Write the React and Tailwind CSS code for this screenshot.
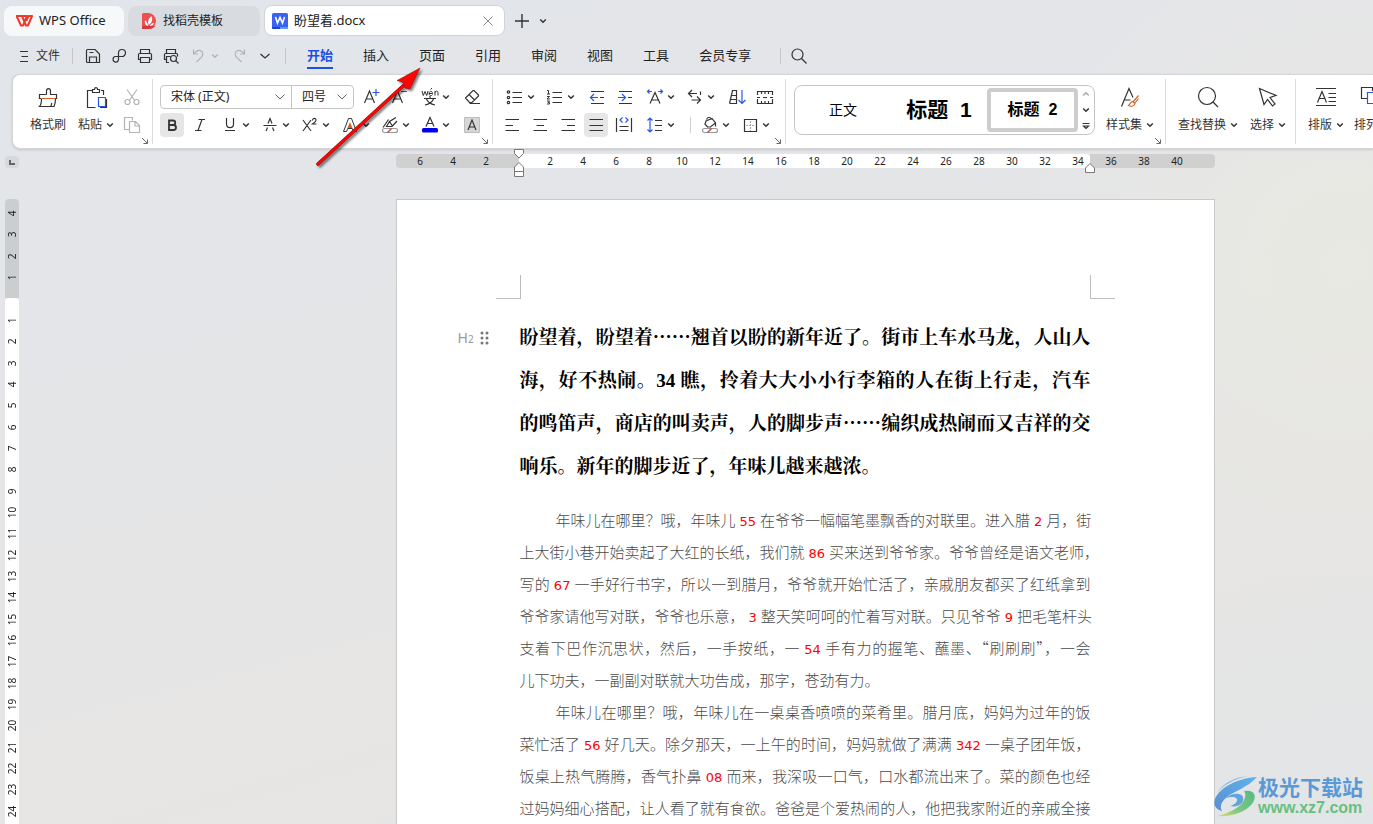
import { Fragment } from "react";

const menus = ["开始", "插入", "页面", "引用", "审阅", "视图", "工具", "会员专享"];

const rulerMid = [2, 4, 6, 8, 10, 12, 14, 16, 18, 20, 22, 24, 26, 28, 30, 32, 34];
const rulerSide = Array.from({ length: 24 }, (_, i) => i + 1);

const headingLines = [
  "盼望着，盼望着……翘首以盼的新年近了。街市上车水马龙，人山人",
  "海，好不热闹。34 瞧，拎着大大小小行李箱的人在街上行走，汽车",
  "的鸣笛声，商店的叫卖声，人的脚步声……编织成热闹而又吉祥的交",
  "响乐。新年的脚步近了，年味儿越来越浓。",
];

const paragraphs = [
  [
    "年味儿在哪里？哦，年味儿55在爷爷一幅幅笔墨飘香的对联里。进入腊2月，街",
    "上大街小巷开始卖起了大红的长纸，我们就86买来送到爷爷家。爷爷曾经是语文老师，",
    "写的67一手好行书字，所以一到腊月，爷爷就开始忙活了，亲戚朋友都买了红纸拿到",
    "爷爷家请他写对联，爷爷也乐意，3整天笑呵呵的忙着写对联。只见爷爷9把毛笔杆头",
    "支着下巴作沉思状，然后，一手按纸，一54手有力的握笔、蘸墨、“刷刷刷”，一会",
    "儿下功夫，一副副对联就大功告成，那字，苍劲有力。",
  ],
  [
    "年味儿在哪里？哦，年味儿在一桌桌香喷喷的菜肴里。腊月底，妈妈为过年的饭",
    "菜忙活了56好几天。除夕那天，一上午的时间，妈妈就做了满满342一桌子团年饭，",
    "饭桌上热气腾腾，香气扑鼻08而来，我深吸一口气，口水都流出来了。菜的颜色也经",
    "过妈妈细心搭配，让人看了就有食欲。爸爸是个爱热闹的人，他把我家附近的亲戚全接",
  ],
];

function Icon({ children, className = "" }) {
  return (
    <svg
      width="24"
      height="24"
      viewBox="0 0 24 24"
      fill="none"
      stroke="currentColor"
      strokeWidth="1.2"
      className={`shrink-0 ${className}`}
      aria-hidden="true"
    >
      {children}
    </svg>
  );
}

function Chevron({ className = "" }) {
  return (
    <svg width="8" height="8" viewBox="0 0 8 8" fill="none" stroke="currentColor" strokeWidth="1.5" className={`shrink-0 ${className}`} aria-hidden="true">
      <path d="M1.2 2.5 4 5.2 6.8 2.5" />
    </svg>
  );
}

const BLUE = "#2458e6";
const ORANGE = "#d4622a";

const icons = {
  menu: <path d="M8 7.5h8M9.5 12.5H16M8 17.5h8" />,
  save: <path d="M5.5 17.5v-11a1 1 0 0 1 1-1h7.5l4.5 4.5v8.5h-12a1 1 0 0 1-1-1zM8.5 18.5V13h7v5.500M8.5 8.5h4" />,
  pdf: <path d="M11.5 16V9a3.500 3.500 0 1 1 3.500 3.500H8.500a2.800 2.800 0 1 0 3 3.500" />,
  print: <path d="M7.5 9.5v-4h9v4M7.5 15.5h-2v-5a1 1 0 0 1 1-1h11a1 1 0 0 1 1 1v5h-2M7.5 13.5h9v5h-9z" />,
  preview: (
    <>
      <path d="M7.5 9.5v-4h9v4M7.5 15.5h-2v-5a1 1 0 0 1 1-1h11a1 1 0 0 1 1 1v2M10 18.5H7.5v-6h4" />
      <circle cx="14.5" cy="14.5" r="3" />
      <path d="m16.7 16.7 2.8 2.8" />
    </>
  ),
  undo: <path d="M6.5 5.5V10H11M6.700 9.800C9 6.700 11.300 5.700 13.500 6.600c3 1.300 2.800 4.700.8 6.700L9.500 18" />,
  redo: <path d="M17.5 5.5V10H13M17.300 9.800C15 6.700 12.700 5.700 10.500 6.600c-3 1.300-2.800 4.700-.8 6.700L14.500 18" />,
  search: (
    <>
      <circle cx="10.5" cy="10.5" r="5.5" />
      <path d="m14.5 14.5 5 5" />
    </>
  ),
  brush: (
    <>
      <path d="M10.5 9.5V6c0-3.300 4-3.300 4 0v3.500h6v4h-17v-4h7M5.500 13.500c0 4-.5 6.500-2 8H18c1-2 1.500-5 1.500-8M14.500 21.500c.8-1 1.200-2.500 1.200-3.500" />
      <path d="M5 13.5h14.5" stroke={ORANGE} />
    </>
  ),
  paste: (
    <>
      <path d="M8 5.5H3.5v17h8M17 5.5h2.5V10M8.5 7.5h7v-3h-2c0-2.500-3-2.500-3 0h-2z" />
      <path d="M14.5 12.5h7v9h-7z" stroke={BLUE} />
      <path d="M22.5 14v8.500H16" />
    </>
  ),
  cut: (
    <>
      <path d="m7 4.500 8 11.500M17 4.500 9 16" />
      <circle cx="7.5" cy="17" r="2.5" />
      <circle cx="16.5" cy="17" r="2.5" />
    </>
  ),
  copy: <path d="M9 16.5H4.500v-12h8v3M9.500 8.500h6l4 4v7h-10zM15 9v4h4" />,
  grow: (
    <>
      <path d="M4.5 18 9.500 6l5 12M6.200 14h6.600" />
      <path d="M16 4v7M12.500 7.500h7" stroke={BLUE} />
    </>
  ),
  shrink: (
    <>
      <path d="M4.5 18 9.500 6l5 12M6.200 14h6.600" />
      <path d="M13 6.500h6" stroke={BLUE} />
    </>
  ),
  pinyin: (
    <>
      <path d="m4 6 1.300 4.500L7 6.500l1.700 4L10 6M11 8.500h3.500c0-2.800-3.500-2.800-3.500 0 0 2.600 3 2.500 3.500 1M12.500 4.500 14 3M17 10.500V6M17 7.500c.8-2 3-1.500 3 0v3" strokeWidth="1" />
      <path d="M12 11v2M6 13.500h12M8.500 14c1 2.500 4 5 8.500 6M15.500 14c-1 2.500-4 5-8.500 6" />
    </>
  ),
  eraser: <path d="m5.500 13 7.500-7.500h1l4.500 4.500v1L12 17.500H9.500zM9 9.500l5.500 5.500M9.500 18.500H20" />,
  bold: <path d="M9 7.500h4a2.200 2.200 0 0 1 0 4.500H9zM9 12h4.500a2.400 2.400 0 0 1 0 5H9z" strokeWidth="1.800" />,
  italic: <path d="M10.500 6.500H17M7 17.500h6.500M14 6.500l-4 11" />,
  underline: <path d="M8.500 5v6c0 4.800 7 4.800 7 0V5M7 17.500h10" />,
  strike: <path d="M5.500 12.500h13M8 18l1.500-3.500M16 18l-1.500-3.500M10 10.500l2-5 2 5" />,
  sup: <path d="m5 7 8 11M13 7 5 18M14.500 7.500c0-3 4-2.500 3.500 0-.2 1-2 2.300-3.500 3.500h4" />,
  outlineA: (
    <>
      <path d="M10.500 5.500h3l5 13h-3l-1.200-3H9.700l-1.200 3h-3z" strokeWidth="1" />
      <path d="m12 9-2.500 6h5z" fill={ORANGE} stroke="none" />
    </>
  ),
  highlight: (
    <>
      <path d="M18 4.500 11.500 8.500l3 4.500 4.500-5M11.500 8.500 8.500 13.500h5l1-.500M5 14.500l5.500-8" />
      <rect x="4.5" y="15.5" width="15" height="4" rx="2" stroke="#999" />
      <path d="m9.500 19.500 4-4" stroke="#e33" />
    </>
  ),
  fontColor: (
    <>
      <path d="M8 13.500 12 4.500l4 9M9.500 10.500h5" />
      <rect x="4" y="15" width="16" height="4.500" rx="1.500" fill="#0000f0" stroke="none" />
    </>
  ),
  shade: (
    <>
      <path d="M4.500 4.500h15v15h-15z" fill="#d6d6d6" stroke="#bdbdbd" strokeWidth="1" />
      <path d="m8 17 4-10 4 10M9.500 14h5" />
    </>
  ),
  bullets: (
    <>
      <circle cx="5.5" cy="7" r="1.2" />
      <circle cx="5.5" cy="12.5" r="1.2" />
      <circle cx="5.5" cy="17.5" r="1.2" />
      <path d="M9.500 7.500H19M9.500 12.500H19M9.500 17.500H19" />
    </>
  ),
  numbers: (
    <>
      <path d="M4 5.500h1.500V9M4 9h3M4 11.500h2.500l-2.500 2.500h3M4 16h2.500L5 17.500h1.500v1.500H4" strokeWidth="1" />
      <path d="M9.500 7.500H19M9.500 12.500H19M9.500 17.500H19" />
    </>
  ),
  outdent: (
    <>
      <path d="M6 6.500h13M15 12.500h4M6 18.500h13" />
      <path d="M13 12.500H5.500M9 9l-3.500 3.500L9 16" stroke={BLUE} />
    </>
  ),
  indent: (
    <>
      <path d="M6 6.500h13M15 12.500h4M6 18.500h13" />
      <path d="M5 12.500h7.500M9 9l3.500 3.500L9 16" stroke={BLUE} />
    </>
  ),
  spacingA: (
    <>
      <path d="m7 18.500 5-11 5 11M9 15h6" />
      <path d="M4.500 6.500H9M6.500 4.500l-2 2 2 2M15 6.500h4.500M17.500 4.500l2 2-2 2" stroke={BLUE} />
    </>
  ),
  wrap: <path d="M9 5 5.500 8.500 9 12M5.500 8.500H14M14 11.500l3.500 3.500-3.500 3.500M17.500 15H8.500M17.500 6.500V10" />,
  sort: (
    <>
      <path d="m4.500 18.500 3-13h4v13h-7M6.500 10.500h5M5.500 14.500h6" />
      <path d="M17 5v13.500M13.500 15l3.500 3.500 3.500-3.500" stroke={BLUE} />
    </>
  ),
  tabstop: <path d="M4.500 10V6.500h15V10M4.500 14v4.500h15V14M4 12.500h3M10 12.500h4M17 12.500h3M8.500 6.500V9M12 6.500V9M15.500 6.500V9M8.500 18.500V16M12 18.500V16M15.500 18.500V16" />,
  left: <path d="M5.500 6.500H19M5.500 12.500H13M5.500 17.500H19" />,
  center: <path d="M5.500 6.500H19M8.500 12.500H16M5.500 17.500H19" />,
  right: <path d="M5.500 6.500H19M11 12.500H19M5.500 17.500H19" />,
  justify: <path d="M5.500 6.500H19M5.500 12.500H19M5.500 17.500H19" />,
  distribute: (
    <>
      <path d="M4.500 5v14M19.500 5v14M7.500 13.500h9M7.500 17.500h9" />
      <path d="M10.500 4.500 8 7l2.500 2.500M13.500 4.500 16 7l-2.500 2.500" stroke={BLUE} />
    </>
  ),
  lineSpace: (
    <>
      <path d="M12 7.500h7M12 12.500h7M12 17.500h7" />
      <path d="M7 5v14M4.500 7.500 7 5l2.500 2.500M4.500 16.500 7 19l2.500-2.500" stroke={BLUE} />
    </>
  ),
  bucket: (
    <>
      <path d="M8.500 6.500c1-3 4-3 5 0M8 8l6-2.500 3.500 4.500-5 4H9.500L7 11zM17.500 9.500v4" />
      <rect x="4.5" y="15.5" width="15" height="4" rx="2" stroke="#999" />
      <path d="m9.500 19.500 4-4" stroke="#e33" />
    </>
  ),
  border: (
    <>
      <path d="M6.500 6.500h12v12h-12z" />
      <path d="M12.500 8v10M8 12.500h9" stroke="#aaa" strokeDasharray="2 1" />
    </>
  ),
  styleSet: (
    <>
      <path d="M3.500 21.500 11 3.500l4 9M6.500 15h6" />
      <path d="M20.500 10.500 15 17M20.500 13.500 17 18M14.500 16.500c-2 0-2 2.500-4 4 2.500 1.500 6 .5 6.500-2z" stroke={ORANGE} />
    </>
  ),
  find: (
    <>
      <circle cx="11" cy="11" r="8.5" />
      <path d="m17 17 5 5" />
    </>
  ),
  select: <path d="M3.500 3.500 8 19.500l3.500-5 5 6.500 2.500-2-5-6.500 6-2z" />,
  typeset: <path d="M2 3.500h20M2 20.500h20M3.500 17.500l4.500-11 4.500 11M5 13.500h6M14.500 8.500H22M14.500 12.500H22M14.500 16.500H22" />,
  arrange: (
    <>
      <path d="M7 13.500H1.500v-11h11V6" />
      <path d="M7.500 7.500h11v11h-11z" stroke={BLUE} />
    </>
  ),
};

// icon-only button; `drop` adds the small arrow, `on` the pressed look
function Tool({ icon, label, drop, on, dim, width = "w-7" }) {
  return (
    <button
      type="button"
      aria-label={label}
      className={`flex h-6 shrink-0 items-center rounded ${drop ? "w-10" : `${width} justify-center`} ${dim ? "text-[#b4b4b4]" : "text-[#333]"}`}
    >
      <span className={`flex h-6 w-6 items-center justify-center rounded ${on ? "bg-[#e6e6e6]" : ""}`}>
        <Icon>{icons[icon]}</Icon>
      </span>
      {drop && <Chevron />}
    </button>
  );
}

function BigTool({ icon, label, drop, className = "" }) {
  return (
    <button type="button" className={`flex shrink-0 flex-col items-center gap-1 text-[#333] ${className}`}>
      <Icon>{icons[icon]}</Icon>
      <span className="flex h-6 items-center gap-1 text-xs whitespace-nowrap">
        {label}
        {drop && <Chevron />}
      </span>
    </button>
  );
}

function Group({ children, launcher, className = "" }) {
  return (
    <section className={`relative flex shrink-0 pt-2.5 ${className}`}>
      {children}
      {launcher && (
        <button type="button" aria-label="更多设置" className="absolute right-1 bottom-1 text-[#666]">
          <svg width="6" height="6" viewBox="0 0 6 6" fill="none" stroke="currentColor" aria-hidden="true">
            <path d="m0 0 5 5M5.500 1.500v4h-4" />
          </svg>
        </button>
      )}
    </section>
  );
}

function Divider() {
  return <div className="my-1 w-px shrink-0 bg-[#dcdcdc]" />;
}

function TabBar() {
  return (
    <header className="flex h-9 items-end gap-1 px-1 text-xs text-[#222]">
      <button type="button" className="flex h-[30px] w-[120px] items-center gap-1.5 rounded-lg bg-[#f7f8fa] pl-3 text-[13px]">
        <svg width="17" height="12" viewBox="0 0 17 12" fill="none" stroke="#f0392b" strokeWidth="2" strokeLinejoin="round" aria-hidden="true">
          <path d="M.5 1H11L7 10.500H5zM6 1l4 9.500h2L16 1h-3.500l-2.300 5" />
        </svg>
        WPS Office
      </button>
      <button type="button" className="flex h-[30px] w-[132px] items-center gap-[7px] rounded-lg bg-[#d8dbe0] pl-3.5">
        <svg width="14" height="16" viewBox="0 0 14 16" aria-hidden="true">
          <path d="M0 1.500A1.500 1.500 0 0 1 1.500 0H6a8 8 0 0 1 0 16H0z" fill="#ee5050" />
          <path d="M0 13h13.500l-2 1.500C10 15.600 8 16 6 16H0z" fill="#d93a40" />
          <path d="M6 13C3 12 2.500 9.500 3 7.500 4.500 8 5.500 9.500 6 13zM6.500 12C5.500 8 6.500 5 9.500 3c1.500 3.500.5 7-3 9zM8 13c.5-2 2-3 4-3-.5 2-2 3-4 3z" fill="#fff" />
        </svg>
        找稻壳模板
      </button>
      <div className="flex h-[31px] w-[241px] items-center rounded-lg border border-[#d0d3d8] bg-white px-[7px]">
        <svg width="16" height="16" viewBox="0 0 16 16" aria-hidden="true">
          <rect width="16" height="16" rx="1.500" fill="#3b63f3" />
          <path d="M0 14h8v2H1.500A1.500 1.500 0 0 1 0 14.500z" fill="#1c43cf" />
          <path d="M8 14h8v.5a1.500 1.500 0 0 1-1.500 1.500H8z" fill="#5d9cfa" />
          <path d="m3.500 4 2 6L8 4.500l2.500 5.500 2-6" fill="none" stroke="#fff" strokeWidth="1.6" />
        </svg>
        <button type="button" className="ml-1.5 flex-1 text-left text-[13px]">
          盼望着.docx
        </button>
        <button type="button" aria-label="关闭" className="mr-1 text-[#888]">
          <svg width="10" height="10" viewBox="0 0 10 10" stroke="currentColor" aria-hidden="true">
            <path d="m.5.5 9 9M9.500.5l-9 9" />
          </svg>
        </button>
      </div>
      <div className="flex text-[#333]">
        <button type="button" aria-label="新建" className="flex h-[30px] w-[26px] items-center justify-center">
          <svg width="14" height="14" viewBox="0 0 14 14" stroke="currentColor" strokeWidth="1.4" aria-hidden="true">
            <path d="M7 0v14M0 7h14" />
          </svg>
        </button>
        <button type="button" aria-label="标签列表" className="ml-1 flex h-[30px] items-center">
          <Chevron />
        </button>
      </div>
    </header>
  );
}

function MenuBar() {
  return (
    <nav className="flex h-[38px] items-center pt-0.5 pl-3 text-[#333]">
      <button type="button" className="flex items-center text-xs">
        <Icon>{icons.menu}</Icon>
        文件
      </button>
      <div className="mr-[7px] ml-3 h-4 w-px bg-[#c4c6ca]" />
      <Tool icon="save" label="保存" width="w-[26px]" />
      <Tool icon="pdf" label="输出为PDF" width="w-[26px]" />
      <Tool icon="print" label="打印" width="w-[26px]" />
      <Tool icon="preview" label="打印预览" width="w-[26px]" />
      <div className="ml-[3px] flex">
        <Tool icon="undo" label="撤销" drop dim />
        <Tool icon="redo" label="恢复" width="w-6" dim />
      </div>
      <button type="button" aria-label="自定义快速访问工具栏" className="ml-2 flex h-6 items-center">
        <svg width="12" height="8" viewBox="0 0 12 8" fill="none" stroke="currentColor" strokeWidth="1.3" aria-hidden="true">
          <path d="m1.500 2 4.500 4 4.500-4" />
        </svg>
      </button>
      <div className="ml-3.5 h-4 w-px bg-[#c4c6ca]" />
      <div className="ml-[21px] flex gap-[30px] text-[13px] text-[#222]">
        {menus.map((m, i) => (
          <button
            key={m}
            type="button"
            className={`h-[26px] border-b-2 leading-6 whitespace-nowrap ${i === 0 ? "border-[#1f50e0] font-bold text-[#1f50e0]" : "border-transparent"}`}
          >
            {m}
          </button>
        ))}
      </div>
      <div className="ml-[29px] h-4 w-px bg-[#c4c6ca]" />
      <Tool icon="search" label="搜索" width="w-9" />
    </nav>
  );
}

function PickList({ label, value, options, className }) {
  return (
    <label className={`relative flex h-full items-center ${className}`}>
      <select aria-label={label} defaultValue={value} className="h-full w-full appearance-none bg-transparent pl-2.5 text-xs text-[#222] outline-none">
        {options.map((o) => (
          <option key={o}>{o}</option>
        ))}
      </select>
      <svg width="10" height="6" viewBox="0 0 10 6" fill="none" stroke="#666" className="pointer-events-none absolute right-1.5" aria-hidden="true">
        <path d="m.5.5 4.500 4.500L9.500.5" />
      </svg>
    </label>
  );
}

function Ribbon() {
  return (
    <div className="ml-3 flex h-[75px] shrink-0 overflow-hidden rounded-l-lg border border-r-0 border-[#d3d5d8] bg-white shadow">
      <Group launcher className="pr-2 pl-[11px]">
        <BigTool icon="brush" label="格式刷" className="w-12" />
        <BigTool icon="paste" label="粘贴" drop className="w-12" />
        <div className="flex flex-col gap-1">
          <Tool icon="cut" label="剪切" width="w-6" dim />
          <Tool icon="copy" label="复制" width="w-6" dim />
        </div>
      </Group>
      <Divider />
      <Group launcher className="pr-1.5 pl-[7px]">
        <div className="flex flex-col gap-1">
          <div className="flex">
            <div className="flex h-6 w-[194px] rounded border border-[#c4c4c4]">
              <PickList label="字体" value="宋体 (正文)" options={["宋体 (正文)", "黑体", "楷体"]} className="flex-1" />
              <div className="w-px bg-[#c4c4c4]" />
              <PickList label="字号" value="四号" options={["三号", "四号", "小四"]} className="w-[61px]" />
            </div>
            <div className="ml-1 flex">
              <Tool icon="grow" label="增大字号" />
              <Tool icon="shrink" label="减小字号" />
            </div>
            <div className="ml-1 flex">
              <Tool icon="pinyin" label="拼音指南" drop />
              <Tool icon="eraser" label="清除格式" />
            </div>
          </div>
          <div className="flex">
            <Tool icon="bold" label="加粗" width="w-6" on />
            <Tool icon="italic" label="倾斜" width="w-8" />
            <div className="ml-0.5 flex">
              <Tool icon="underline" label="下划线" drop />
              <Tool icon="strike" label="删除线" drop />
              <Tool icon="sup" label="上标" drop />
              <Tool icon="outlineA" label="文字效果" drop />
              <Tool icon="highlight" label="突出显示" drop />
              <Tool icon="fontColor" label="字体颜色" drop />
              <Tool icon="shade" label="字符底纹" />
            </div>
          </div>
        </div>
      </Group>
      <Divider />
      <Group launcher className="pr-1.5 pl-[5px]">
        <div className="flex flex-col gap-1">
          <div className="flex pl-[5px]">
            <Tool icon="bullets" label="项目符号" drop />
            <Tool icon="numbers" label="编号" drop />
            <Tool icon="outdent" label="减少缩进量" />
            <Tool icon="indent" label="增加缩进量" />
            <div className="ml-1 flex">
              <Tool icon="spacingA" label="中文版式" drop />
              <Tool icon="wrap" label="换行" drop />
              <Tool icon="sort" label="排序" />
              <Tool icon="tabstop" label="制表位" />
            </div>
          </div>
          <div className="flex">
            <Tool icon="left" label="左对齐" />
            <Tool icon="center" label="居中对齐" />
            <Tool icon="right" label="右对齐" />
            <Tool icon="justify" label="两端对齐" on />
            <Tool icon="distribute" label="分散对齐" />
            <div className="ml-[5px] flex">
              <Tool icon="lineSpace" label="行距" drop />
              <div className="mx-[7px] my-1 w-px bg-[#d0d0d0]" />
              <Tool icon="bucket" label="底纹颜色" drop />
              <Tool icon="border" label="边框" drop />
            </div>
          </div>
        </div>
      </Group>
      <Divider />
      <Group launcher className="pl-2">
        <div className="flex h-[50px] rounded-lg border border-[#c4c4c4] text-black">
          <button type="button" className="w-24 text-sm">
            正文
          </button>
          <button type="button" className="w-24 font-['Liberation_Sans','Noto_Sans_CJK_SC',sans-serif] text-[21px] font-bold whitespace-pre">
            标题  1
          </button>
          <button type="button" className="my-0.5 w-[91px] rounded border-4 border-[#cdcdcd] font-['Liberation_Sans','Noto_Sans_CJK_SC',sans-serif] text-base leading-4 font-bold whitespace-pre">
            标题  2
          </button>
          <div className="flex w-4 flex-col items-center justify-around text-[#333]">
            <button type="button" aria-label="上一行">
              <Chevron className="rotate-180 text-[#aaa]" />
            </button>
            <button type="button" aria-label="下一行">
              <Chevron />
            </button>
            <button type="button" aria-label="展开样式">
              <svg width="8" height="8" viewBox="0 0 8 8" fill="none" stroke="currentColor" strokeWidth="1.2" aria-hidden="true">
                <path d="M.5 1.500h7M1.500 4 4 6.500 6.500 4z" />
              </svg>
            </button>
          </div>
        </div>
        <BigTool icon="styleSet" label="样式集" drop className="w-[70px]" />
      </Group>
      <Divider />
      <Group className="pl-[9px]">
        <BigTool icon="find" label="查找替换" drop className="w-[66px]" />
        <BigTool icon="select" label="选择" drop className="w-[54px]" />
      </Group>
      <Divider />
      <Group className="pl-2">
        <BigTool icon="typeset" label="排版" drop className="w-11" />
        <BigTool icon="arrange" label="排列" drop className="w-12" />
      </Group>
    </div>
  );
}

function RulerCells({ values }) {
  return values.map((v) => (
    <span key={v} className="w-[33px] shrink-0 text-center">
      {v}
    </span>
  ));
}

function HorizontalRuler() {
  return (
    <div className="relative mt-1 flex h-3.5 w-[819px] text-[10px] leading-[14px] text-[#222]">
      <div className="flex w-[123px] rounded-l bg-[#d0d0d0] pl-2">
        <RulerCells values={[6, 4, 2]} />
      </div>
      <div className="flex flex-1 rounded bg-white pl-[15px]">
        <div className="flex w-0">
          <RulerCells values={rulerMid} />
        </div>
      </div>
      <div className="flex w-[125px] rounded-r bg-[#d0d0d0] pl-[5px]">
        <RulerCells values={[36, 38, 40]} />
      </div>
      {/* indent handles */}
      <svg width="12" height="30" viewBox="0 0 12 30" fill="#fff" stroke="#777" className="absolute -top-1.5 left-[117px]" aria-hidden="true">
        <path d="M1.500 2.500h9v4L6 11 1.500 6.500zM1.500 24.500V20L6 15.500l4.500 4.500v4.500zM1.500 24.500h9v5h-9z" transform="translate(0 -1)" />
      </svg>
      <svg width="12" height="12" viewBox="0 0 12 12" fill="#fff" stroke="#777" className="absolute top-2 left-[688px]" aria-hidden="true">
        <path d="M1.500 10.500V6L6 1.500 10.500 6v4.500z" />
      </svg>
    </div>
  );
}

function VerticalRuler() {
  return (
    <aside className="flex w-3.5 shrink-0 flex-col text-[10px] leading-[14px] text-[#222]">
      <div className="flex h-[49px] shrink-0 items-start pt-1.5">
        <div className="flex h-3 w-3.5 items-center justify-center rounded bg-[#d6d8da]">
          <svg width="6" height="5" viewBox="0 0 6 5" fill="none" stroke="#666" strokeWidth="2" aria-hidden="true">
            <path d="M1 0v4h5" />
          </svg>
        </div>
      </div>
      <div className="flex h-[99px] shrink-0 flex-col rounded-t bg-[#cbcecf] pt-1 pb-2.5">
        {[4, 3, 2, 1].map((n) => (
          <span key={n} className="flex flex-1 rotate-180 items-center justify-center [writing-mode:vertical-rl]">
            {n}
          </span>
        ))}
      </div>
      <div className="flex h-[526px] shrink-0 flex-col rounded-t bg-white pt-3 pb-0.5">
        {rulerSide.map((n) => (
          <span key={n} className="flex flex-1 rotate-180 items-center justify-center [writing-mode:vertical-rl]">
            {n}
          </span>
        ))}
      </div>
    </aside>
  );
}

function HeadingLine({ text, last }) {
  return (
    <span className={`block text-justify whitespace-nowrap ${last ? "" : "[text-align-last:justify]"}`}>
      {text.split(/(……)/).map((part, i) =>
        part === "……" ? (
          <span key={i} className="font-['Noto_Sans_CJK_SC',sans-serif] leading-none">
            {part}
          </span>
        ) : (
          <Fragment key={i}>{part}</Fragment>
        )
      )}
    </span>
  );
}

function BodyLine({ text, first, last }) {
  return (
    <span className={`block text-justify whitespace-nowrap ${first ? "pl-9" : ""} ${last ? "" : "[text-align-last:justify]"}`}>
      {text.split(/(\d+)/).map((part, i) =>
        /^\d+$/.test(part) ? (
          <span key={i} className="mx-1 font-['DejaVu_Sans',sans-serif] text-[13px] leading-none font-normal text-[#ff0000]">
            {part}
          </span>
        ) : (
          <Fragment key={i}>{part}</Fragment>
        )
      )}
    </span>
  );
}

function Page() {
  return (
    <article className="mt-[31px] w-[819px] shrink-0 border border-[#c9c9c9] bg-white pt-[75px] pb-24">
      <div className="flex justify-between px-[99px]">
        <div className="h-6 w-[25px] border-r border-b border-[#bcbcbc]" />
        <div className="h-6 w-[25px] border-b border-l border-[#bcbcbc]" />
      </div>
      <div className="mt-[17px] flex pr-[123px] pl-[61px]">
        <div className="flex h-[43px] w-[62px] shrink-0 items-center gap-1.5 text-sm text-[#999]">
          <span>
            H<span className="text-[10px]">2</span>
          </span>
          <svg width="9" height="14" viewBox="0 0 9 14" fill="#777" aria-hidden="true">
            {[2, 7, 12].map((y) => (
              <Fragment key={y}>
                <circle cx="2" cy={y} r="1.5" />
                <circle cx="7" cy={y} r="1.5" />
              </Fragment>
            ))}
          </svg>
        </div>
        <h2 className="flex-1 font-['Liberation_Serif','Noto_Serif_CJK_SC','Noto_Sans_CJK_SC',serif] text-[19px] leading-[43px] font-bold text-black">
          {headingLines.map((line, i) => (
            <HeadingLine key={line} text={line} last={i === headingLines.length - 1} />
          ))}
        </h2>
      </div>
      <div className="mt-4 px-[123px] font-['Noto_Sans_CJK_SC',sans-serif] text-[15px] leading-8 font-light text-[#4a4a4a]">
        {paragraphs.map((lines, p) => (
          <p key={p}>
            {lines.map((line, i) => (
              <BodyLine key={line} text={line} first={i === 0} last={p === 0 && i === lines.length - 1} />
            ))}
          </p>
        ))}
      </div>
    </article>
  );
}

function Watermark() {
  return (
    <div className="absolute right-2.5 bottom-1.5 flex items-center">
      <svg width="44" height="42" viewBox="0 0 44 42" aria-hidden="true">
        <defs>
          <linearGradient id="swirlBlue" x1="1" y1="0" x2="0" y2="1">
            <stop offset="0" stopColor="#5fb2ea" />
            <stop offset="1" stopColor="#5a8fd2" />
          </linearGradient>
          <linearGradient id="swirlGreen" x1="1" y1="0" x2="0" y2="1">
            <stop offset="0" stopColor="#55bb82" />
            <stop offset=".6" stopColor="#7cc683" />
            <stop offset="1" stopColor="#dde06c" />
          </linearGradient>
        </defs>
        <path d="M34 0C20 1 8 8 3 17 9 9 20 3 34 0z" fill="#8fb9e4" />
        <path d="M43 1C24 2 6 11 1 23c-2 6 1 11 7 12-3-5 0-10 5-14 7-6 20-9 30-20z" fill="url(#swirlBlue)" />
        <path d="M12 22c5-5 15-6 17-1 2 6-5 11-13 9 5-1 8-5 7-7-2-3-7-2-11-1z" fill="#62a5dd" />
        <path d="M30 15c10-2 14 5 8 13C32 36 17 41 3 40c12-3 22-8 26-14 3-5 3-8 1-11z" fill="url(#swirlGreen)" />
      </svg>
      <div className="flex flex-col text-[#5b99d6]">
        <span className="text-[21px] leading-[22px] font-bold">极光下载站</span>
        <span className="font-['Liberation_Sans',sans-serif] text-base leading-5 font-bold text-[#67bf82]">www.xz7.com</span>
      </div>
    </div>
  );
}

function PointerArrow() {
  return (
    <svg width="116" height="110" viewBox="0 0 116 110" className="pointer-events-none absolute top-[62px] left-[312px] drop-shadow-[2px_2px_1px_rgba(0,0,0,0.5)]" aria-hidden="true">
      <path d="M6 102 91 24" stroke="#7a1010" strokeWidth="3.6" strokeLinecap="round" />
      <path d="M6 102 91 24" stroke="#fb0505" strokeWidth="2.6" strokeLinecap="round" />
      <path d="M108 6 85 18.500l6 2 2 5.500 5 1z" fill="#fb0505" stroke="#8a0c0c" strokeWidth=".5" />
    </svg>
  );
}

export default function App() {
  return (
    <div
      lang="zh-CN"
      className="relative flex h-screen flex-col overflow-hidden bg-[#e4e5e7] bg-[radial-gradient(circle_at_98%_32%,#e9e9e3_0%,transparent_22%),linear-gradient(165deg,#e1e5ea_0%,#e4e5e9_22%,#e5e5e6_50%,#e7e5e4_72%,#e2e5e7_100%)] font-['Noto_Sans','Noto_Sans_CJK_SC',sans-serif]"
    >
      <TabBar />
      <MenuBar />
      <Ribbon />
      <main className="flex min-h-0 flex-1 overflow-hidden pt-px pl-[5px]">
        <VerticalRuler />
        <div className="flex flex-1 flex-col items-center pl-[218px]">
          <HorizontalRuler />
          <Page />
        </div>
      </main>
      <PointerArrow />
      <Watermark />
    </div>
  );
}
